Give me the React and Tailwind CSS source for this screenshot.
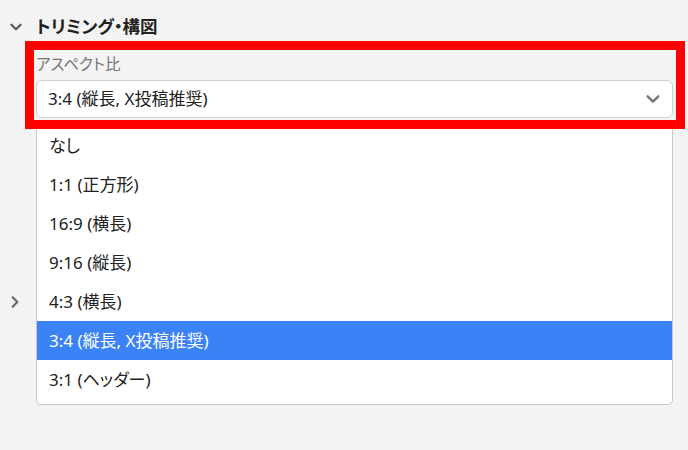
import React from 'react';

const options = [
  'なし',
  '1:1 (正方形)',
  '16:9 (横長)',
  '9:16 (縦長)',
  '4:3 (横長)',
  '3:4 (縦長, X投稿推奨)',
  '3:1 (ヘッダー)',
];

const selected = '3:4 (縦長, X投稿推奨)';

const Chevron = ({ dir = 'down', className = '' }) => (
  <svg viewBox="0 0 12 12" className={className} fill="none" stroke="currentColor" strokeWidth="1.8" strokeLinecap="round" strokeLinejoin="round">
    {dir === 'down' ? <path d="M2 4l4 4 4-4" /> : <path d="M4 2l4 4-4 4" />}
  </svg>
);

export default function App() {
  return (
    <div
      className="w-[688px] h-[450px] overflow-hidden bg-[#f3f3f3] text-[#222] [font-feature-settings:'palt']"
      style={{ fontFamily: '"Noto Sans", "Noto Sans CJK JP", sans-serif' }}
    >
      {/* section header */}
      <div className="flex items-center h-[24px] mt-[15px]">
        <Chevron className="w-[14px] h-[14px] ml-[9px] text-[#555]" />
        <span className="ml-[13px] text-[17.5px] font-bold leading-none">トリミング・構図</span>
      </div>

      {/* aspect ratio field */}
      <div className="relative ml-[34px] w-[642px] mt-[11px] pb-[2px]">
        <div className="h-[30px] pl-[2px] pt-[3px] text-[15.5px] leading-[22px] text-[#767676]">アスペクト比</div>
        <div className="ml-[2px] mr-[3px] h-[38px] flex items-center justify-between rounded-[6px] border border-[#cfcfcf] bg-white pl-[11px] pr-[11px]">
          <span className="text-[17px]">{selected}</span>
          <Chevron className="w-[16px] h-[16px] text-[#777]" />
        </div>

        {/* open list */}
        <div className="absolute z-10 left-[2px] right-[3px] top-[70px] pt-[5px] pb-[5px] bg-white border border-[#c8c8c8] rounded-b-[5px]">
          {options.map(o => (
            <div
              key={o}
              className={`h-[39px] flex items-center pl-[12px] text-[17px] ${o === selected ? 'bg-[#3b82f6] text-white' : 'text-[#222]'}`}
            >
              {o}
            </div>
          ))}
        </div>

        {/* annotation frame */}
        <div className="absolute z-20 -inset-[9px] border-[9px] border-[#ff0000] pointer-events-none" />
      </div>

      {/* next collapsed section, behind the list */}
      <div className="flex items-center h-[24px] mt-[170px]">
        <Chevron dir="right" className="w-[14px] h-[14px] ml-[8px] text-[#666]" />
      </div>
    </div>
  );
}
